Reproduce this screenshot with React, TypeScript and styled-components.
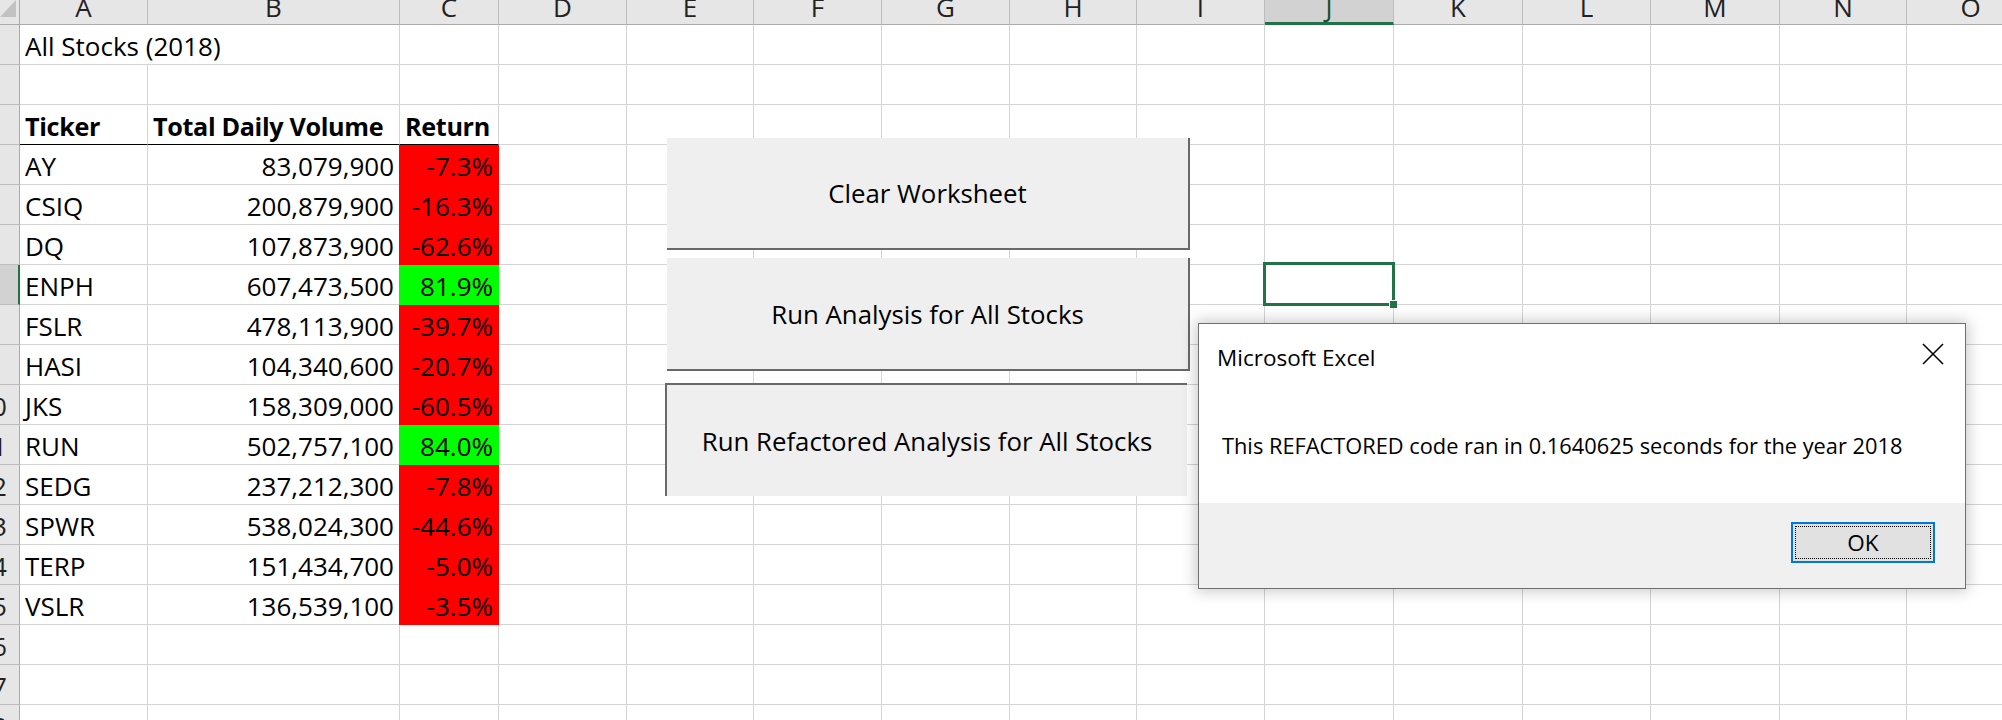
import React from "react";
import styled, { createGlobalStyle, css } from "styled-components";

const GlobalStyle = createGlobalStyle`
  html, body {
    margin: 0;
    padding: 0;
    background: #ffffff;
    overflow: hidden;
  }
  #root {
    width: 2002px;
    height: 720px;
  }
`;

const COL_LETTERS = ["A", "B", "C", "D", "E", "F", "G", "H", "I", "J", "K", "L", "M", "N", "O"];
const COL_WIDTHS = [128, 252, 99, 128, 127, 128, 128, 127, 128, 129, 129, 128, 129, 127, 128];
const SELECTED_COL = 9; // J
const SELECTED_ROW = 7;
const ROW_COUNT = 18;

type Stock = { ticker: string; volume: string; ret: string; up: boolean };

const STOCKS: Stock[] = [
  { ticker: "AY", volume: "83,079,900", ret: "-7.3%", up: false },
  { ticker: "CSIQ", volume: "200,879,900", ret: "-16.3%", up: false },
  { ticker: "DQ", volume: "107,873,900", ret: "-62.6%", up: false },
  { ticker: "ENPH", volume: "607,473,500", ret: "81.9%", up: true },
  { ticker: "FSLR", volume: "478,113,900", ret: "-39.7%", up: false },
  { ticker: "HASI", volume: "104,340,600", ret: "-20.7%", up: false },
  { ticker: "JKS", volume: "158,309,000", ret: "-60.5%", up: false },
  { ticker: "RUN", volume: "502,757,100", ret: "84.0%", up: true },
  { ticker: "SEDG", volume: "237,212,300", ret: "-7.8%", up: false },
  { ticker: "SPWR", volume: "538,024,300", ret: "-44.6%", up: false },
  { ticker: "TERP", volume: "151,434,700", ret: "-5.0%", up: false },
  { ticker: "VSLR", volume: "136,539,100", ret: "-3.5%", up: false },
];

const GRID = "#d4d4d4";
const HEADER_BG = "#e6e6e6";
const HEADER_LINE = "#bdbdbd";
const EXCEL_GREEN = "#217346";

const Page = styled.div`
  position: relative;
  width: 2002px;
  height: 720px;
  overflow: hidden;
  background: #ffffff;
  font-family: "Open Sans", "Noto Sans", sans-serif;
  color: #000;
`;

const SheetGrid = styled.div`
  display: grid;
  grid-template-columns: 20px ${COL_WIDTHS.map((w) => `${w}px`).join(" ")};
  grid-template-rows: 25px repeat(${ROW_COUNT}, 40px);
`;

const Corner = styled.div`
  background: ${HEADER_BG};
  border-right: 1px solid #ababab;
  border-bottom: 1px solid #ababab;
  box-sizing: border-box;
  display: flex;
  align-items: flex-start;
  justify-content: flex-start;
`;

const ColHeader = styled.div<{ $selected?: boolean }>`
  box-sizing: border-box;
  background: ${(p) => (p.$selected ? "#d2d2d2" : HEADER_BG)};
  border-right: 1px solid ${HEADER_LINE};
  border-bottom: ${(p) => (p.$selected ? `3px solid ${EXCEL_GREEN}` : "1px solid #ababab")};
  display: flex;
  align-items: flex-end;
  justify-content: center;
  overflow: hidden;
  font-size: 26px;
  line-height: 26px;
  padding-bottom: ${(p) => (p.$selected ? "2px" : "4px")};
  color: ${(p) => (p.$selected ? "#174f30" : "#222")};
`;

const RowHeader = styled.div<{ $selected?: boolean }>`
  box-sizing: border-box;
  background: ${(p) => (p.$selected ? "#d2d2d2" : HEADER_BG)};
  border-right: ${(p) => (p.$selected ? `2px solid ${EXCEL_GREEN}` : "1px solid #ababab")};
  border-bottom: 1px solid ${HEADER_LINE};
  display: flex;
  align-items: flex-end;
  overflow: hidden;
  font-size: 26px;
  line-height: 26px;
  padding-bottom: 5px;
  color: #222;
`;

const RowLabel = styled.span`
  flex: none;
  width: 40px;
  margin-left: -28px;
  text-align: center;
`;

const Cell = styled.div<{
  $fill?: string;
  $align?: "left" | "right";
  $bold?: boolean;
  $rule?: boolean;
  $span?: number;
  $selected?: boolean;
}>`
  box-sizing: border-box;
  min-width: 0;
  display: flex;
  align-items: flex-end;
  justify-content: ${(p) => (p.$align === "right" ? "flex-end" : "flex-start")};
  padding: 0 5px 5px 5px;
  font-size: ${(p) => (p.$bold ? "25.2px" : "26px")};
  line-height: 26px;
  white-space: nowrap;
  font-weight: ${(p) => (p.$bold ? 700 : 400)};
  letter-spacing: ${(p) => (p.$bold ? "-0.35px" : "0")};
  border-right: 1px solid ${(p) => p.$fill ?? GRID};
  border-bottom: 1px solid ${(p) => (p.$rule ? "#000" : p.$fill ?? GRID)};
  ${(p) =>
    p.$fill &&
    css`
      background: ${p.$fill};
      box-shadow: -1px 0 0 ${p.$fill};
    `}
  ${(p) =>
    p.$span &&
    css`
      grid-column: span ${p.$span};
    `}
  ${(p) =>
    p.$selected &&
    css`
      position: relative;
    `}
`;

const SelectionFrame = styled.div`
  position: absolute;
  top: -3px;
  left: -2px;
  right: -2px;
  bottom: -2px;
  border: 3px solid ${EXCEL_GREEN};
  pointer-events: none;
  z-index: 2;
`;

const FillHandle = styled.div`
  position: absolute;
  right: -5px;
  bottom: -5px;
  width: 7px;
  height: 7px;
  background: ${EXCEL_GREEN};
  border-left: 1px solid #fff;
  border-top: 1px solid #fff;
`;

const MacroButton = styled.button<{ $x: number; $y: number; $w: number; $h: number; $pressed?: boolean }>`
  position: absolute;
  left: ${(p) => p.$x}px;
  top: ${(p) => p.$y}px;
  width: ${(p) => p.$w}px;
  height: ${(p) => p.$h}px;
  box-sizing: border-box;
  margin: 0;
  padding: 0;
  background: #efefef;
  font-family: "Open Sans", "Noto Sans", sans-serif;
  font-size: 25.8px;
  color: #000;
  display: flex;
  align-items: center;
  justify-content: center;
  border: none;
  ${(p) =>
    p.$pressed
      ? css`
          border-top: 2px solid #696969;
          border-left: 2px solid #696969;
        `
      : css`
          border-right: 2px solid #696969;
          border-bottom: 2px solid #696969;
        `}
`;

const Dialog = styled.div`
  position: absolute;
  left: 1198px;
  top: 323px;
  width: 768px;
  height: 266px;
  box-sizing: border-box;
  background: #ffffff;
  border: 1px solid #707070;
  box-shadow: 0 0 14px 2px rgba(0, 0, 0, 0.22);
  display: flex;
  flex-direction: column;
  font-family: "Open Sans", "Noto Sans", sans-serif;
  z-index: 5;
`;

const DialogTitleBar = styled.div`
  height: 64px;
  display: flex;
  align-items: center;
  justify-content: space-between;
  padding: 0 21px 0 18px;
`;

const DialogTitle = styled.span`
  font-size: 22.5px;
  color: #000;
  padding-top: 2px;
`;

const CloseIcon = styled.svg`
  width: 22px;
  height: 22px;
  margin-top: -4px;
`;

const DialogBody = styled.div`
  flex: 1;
  display: flex;
  align-items: center;
  padding-left: 23px;
  font-size: 21.8px;
  color: #000;
`;

const DialogFooter = styled.div`
  height: 85px;
  background: #f0f0f0;
  display: flex;
  justify-content: flex-end;
  align-items: flex-start;
  padding: 19px 30px 0 0;
  box-sizing: border-box;
`;

const OkButton = styled.button`
  width: 144px;
  height: 41px;
  box-sizing: border-box;
  margin: 0;
  padding: 2px;
  border: 2px solid #0078d7;
  background: #e1e1e1;
  font-family: "Open Sans", "Noto Sans", sans-serif;
  font-size: 22.5px;
  color: #000;
  display: flex;
`;

const OkFocus = styled.span`
  flex: 1;
  display: flex;
  align-items: center;
  justify-content: center;
  border: 1px dotted #000;
`;

const CornerTriangle = () => (
  <svg width="16" height="17" viewBox="0 0 16 17">
    <polygon points="16,0 16,17 0,17" fill="#c2c2c2" />
  </svg>
);

export default function App() {
  const rows: React.ReactNode[] = [];

  for (let r = 1; r <= ROW_COUNT; r++) {
    const isSel = r === SELECTED_ROW;
    rows.push(
      <RowHeader key={`rh${r}`} $selected={isSel}>
        <RowLabel>{r}</RowLabel>
      </RowHeader>
    );

    const stock = r >= 4 && r <= 15 ? STOCKS[r - 4] : undefined;
    const cells: React.ReactNode[] = [];

    if (r === 1) {
      cells.push(
        <Cell key="a" $span={2}>
          All Stocks (2018)
        </Cell>
      );
      cells.push(<Cell key="c" />);
    } else if (r === 3) {
      cells.push(
        <Cell key="a" $bold $rule>
          Ticker
        </Cell>
      );
      cells.push(
        <Cell key="b" $bold $rule>
          Total Daily Volume
        </Cell>
      );
      cells.push(
        <Cell key="c" $bold $rule>
          Return
        </Cell>
      );
    } else if (stock) {
      cells.push(<Cell key="a">{stock.ticker}</Cell>);
      cells.push(
        <Cell key="b" $align="right">
          {stock.volume}
        </Cell>
      );
      cells.push(
        <Cell key="c" $align="right" $fill={stock.up ? "#00ff00" : "#ff0000"}>
          {stock.ret}
        </Cell>
      );
    } else {
      cells.push(<Cell key="a" />, <Cell key="b" />, <Cell key="c" />);
    }

    for (let c = 3; c < COL_LETTERS.length; c++) {
      const selected = isSel && c === SELECTED_COL;
      cells.push(
        <Cell key={`x${c}`} $selected={selected}>
          {selected && (
            <SelectionFrame>
              <FillHandle />
            </SelectionFrame>
          )}
        </Cell>
      );
    }
    rows.push(<React.Fragment key={`r${r}`}>{cells}</React.Fragment>);
  }

  return (
    <>
      <GlobalStyle />
      <Page>
        <SheetGrid>
          <Corner>
            <CornerTriangle />
          </Corner>
          {COL_LETTERS.map((l, i) => (
            <ColHeader key={l} $selected={i === SELECTED_COL}>
              {l}
            </ColHeader>
          ))}
          {rows}
        </SheetGrid>

        <MacroButton $x={667} $y={138} $w={523} $h={112}>
          Clear Worksheet
        </MacroButton>
        <MacroButton $x={667} $y={258} $w={523} $h={113}>
          Run Analysis for All Stocks
        </MacroButton>
        <MacroButton $x={665} $y={383} $w={522} $h={113} $pressed>
          Run Refactored Analysis for All Stocks
        </MacroButton>

        <Dialog>
          <DialogTitleBar>
            <DialogTitle>Microsoft Excel</DialogTitle>
            <CloseIcon viewBox="0 0 22 22">
              <line x1="1" y1="1" x2="21" y2="21" stroke="#000" strokeWidth="1.6" />
              <line x1="21" y1="1" x2="1" y2="21" stroke="#000" strokeWidth="1.6" />
            </CloseIcon>
          </DialogTitleBar>
          <DialogBody>This REFACTORED code ran in 0.1640625 seconds for the year 2018</DialogBody>
          <DialogFooter>
            <OkButton>
              <OkFocus>OK</OkFocus>
            </OkButton>
          </DialogFooter>
        </Dialog>
      </Page>
    </>
  );
}
